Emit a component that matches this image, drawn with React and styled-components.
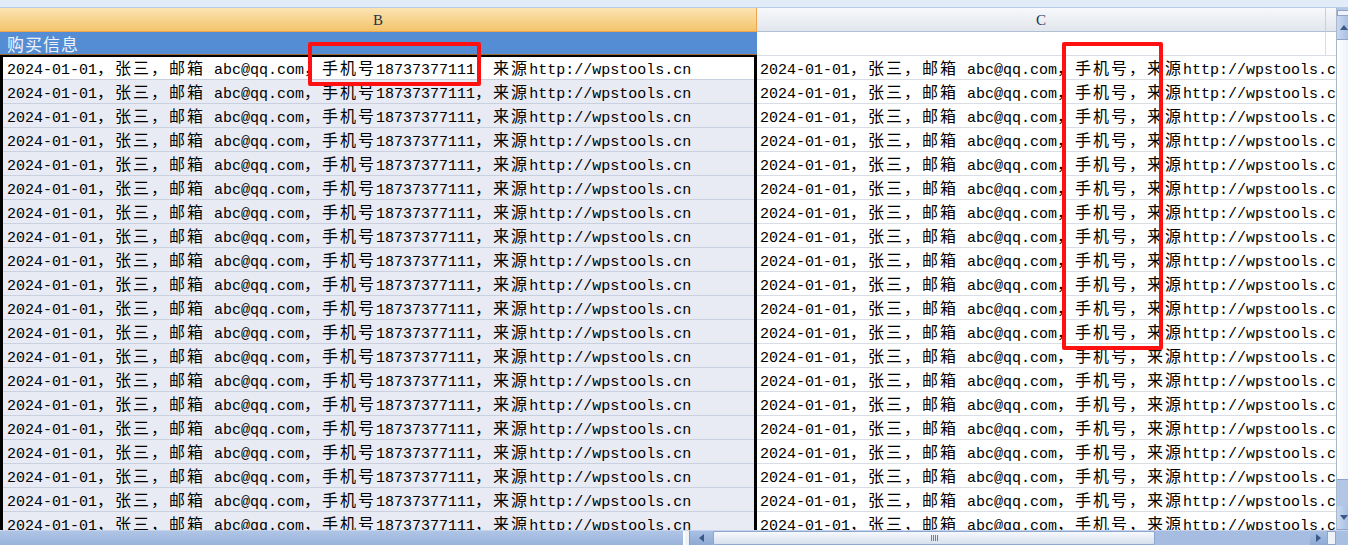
import React from "react";
import styled, { createGlobalStyle } from "styled-components";

const Global = createGlobalStyle`
  html, body { margin: 0; padding: 0; background: #ffffff; overflow: hidden; }
  #root { width: 1348px; height: 545px; }
  * { box-sizing: border-box; }
`;

const Frame = styled.div`
  position: relative;
  width: 1348px;
  height: 545px;
  display: flex;
  flex-direction: column;
  overflow: hidden;
  background: #fff;
`;

const TopStrip = styled.div`
  height: 8px;
  flex: none;
  background: #e2ecf8;
  border-bottom: 1px solid #b7cbe6;
`;

const Main = styled.div`
  flex: 1;
  display: flex;
  min-height: 0;
`;

const Sheet = styled.div`
  position: relative;
  flex: 1;
  overflow: hidden;
  display: flex;
  flex-direction: column;
`;

const Row = styled.div`
  display: flex;
  height: 24px;
  flex: none;
`;

const ColHeader = styled.div`
  height: 24px;
  display: flex;
  align-items: center;
  justify-content: center;
  font-family: "Liberation Serif", serif;
  font-size: 15px;
  color: #27344a;
  padding-top: 1px;
  ${(p) =>
    p.$selected
      ? `
    width: 757px;
    background: linear-gradient(#fbe4b3, #f4c46b);
    border-bottom: 1px solid #eea54c;
    border-right: 1px solid #eea54c;
  `
      : `
    width: 569px;
    background: linear-gradient(#f7f8fa, #e2e6ed);
    border-bottom: 1px solid #b2c0d3;
    border-right: 1px solid #c6cfdb;
  `}
`;

const ColHeaderFill = styled.div`
  flex: 1;
  height: 24px;
  background: linear-gradient(#f7f8fa, #e2e6ed);
  border-bottom: 1px solid #b2c0d3;
`;

const TitleCell = styled.div`
  width: 757px;
  height: 24px;
  background: #548dd4;
  box-shadow: inset 0 -2px 0 #9c6c38;
  color: #eef3fb;
  font-family: "Noto Sans CJK SC", sans-serif;
  font-size: 17px;
  letter-spacing: 1px;
  line-height: 24px;
  padding-left: 7px;
`;

const BlankCell = styled.div`
  height: 24px;
  background: #fff;
  border-bottom: 1px solid #d9dde4;
  ${(p) => (p.$fill ? "flex: 1;" : "width: 569px; border-right: 1px solid #d9dde4;")}
`;

const BCell = styled.div`
  width: 757px;
  flex: none;
  height: 24px;
  line-height: 22px;
  padding: 0 0 0 7px;
  white-space: pre;
  background: ${(p) => (p.$active ? "#ffffff" : "#e8ebf4")};
  border-bottom: 1px solid #c9d0df;
  color: #000;
`;

const CCell = styled.div`
  flex: 1;
  height: 24px;
  line-height: 22px;
  padding: 0 0 0 3px;
  white-space: pre;
  overflow: hidden;
  background: #fff;
  border-bottom: 1px solid #d9dde4;
  color: #000;
`;

const Latin = styled.span`
  font-family: "Liberation Mono", monospace;
  font-size: 15px;
`;

const Han = styled.span`
  font-family: "Noto Sans CJK SC", sans-serif;
  font-size: 16px;
  letter-spacing: 2px;
`;

const Selection = styled.div`
  position: absolute;
  left: 0;
  top: 47px;
  width: 757px;
  height: 520px;
  border: 3px solid #000;
  border-top-width: 2px;
  pointer-events: none;
`;

const RedBox = styled.div`
  position: absolute;
  border: 4px solid #ff1111;
  border-radius: 2px;
  pointer-events: none;
  left: ${(p) => p.$x}px;
  top: ${(p) => p.$y}px;
  width: ${(p) => p.$w}px;
  height: ${(p) => p.$h}px;
`;

const VScroll = styled.div`
  width: 12px;
  flex: none;
  display: flex;
  flex-direction: column;
  background: #b3c6e5;
  border-left: 1px solid #a7b7cc;
`;

const SplitBox = styled.div`
  height: 6px;
  margin-top: 2px;
  background: #eef3fa;
  border: 1px solid #8ea5c9;
  border-right: none;
`;

const VButton = styled.div`
  height: 24px;
  flex: none;
  display: flex;
  align-items: center;
  justify-content: center;
  padding-left: 2px;
  background: linear-gradient(90deg, #c9d8ef, #a9c0e3);
  border-bottom: 1px solid #8ea5c9;
`;

const VThumb = styled.div`
  height: 440px;
  flex: none;
  background: linear-gradient(90deg, #ffffff, #eef2f8);
  border-bottom: 1px solid #8ea5c9;
`;

const VTrack = styled.div`
  flex: 1;
  background: #b3c6e5;
`;

const HScroll = styled.div`
  height: 15px;
  flex: none;
  display: flex;
  background: #a3bbe0;
  border-top: 1px solid #c5d4ea;
`;

const TabArea = styled.div`
  width: 683px;
  background: linear-gradient(#afc5e6, #9ab3da);
`;

const Splitter = styled.div`
  width: 7px;
  background: #eef3fa;
  border-left: 2px solid #ffffff;
  border-right: 1px solid #7f9cc8;
`;

const HButton = styled.div`
  width: ${(p) => p.$w}px;
  display: flex;
  align-items: center;
  justify-content: center;
  background: linear-gradient(#a9c0e3, #8ea9d3);
`;

const HThumb = styled.div`
  width: 442px;
  display: flex;
  align-items: center;
  justify-content: center;
  background: linear-gradient(#f7f9fc, #d7e0ee);
  border: 1px solid #8ea7cf;
  border-radius: 2px;
`;

const Grip = styled.div`
  width: 7px;
  height: 6px;
  background: repeating-linear-gradient(90deg, #6d7f99 0 1px, transparent 1px 2px);
`;

const HTrack = styled.div`
  flex: 1;
  background: #a6bde1;
`;

const EndBox = styled.div`
  width: 9px;
  background: #eef3fa;
  border: 1px solid #8ea5c9;
`;

const Corner = styled.div`
  width: 12px;
  background: #a9bfe2;
`;

function Mixed({ text }) {
  const parts = text.split(/([\u0000-\u007f]+)/).filter(Boolean);
  return parts.map((t, i) =>
    /^[\u0000-\u007f]+$/.test(t) ? <Latin key={i}>{t}</Latin> : <Han key={i}>{t}</Han>
  );
}

const Arrow = ({ dir }) => {
  const pts = {
    up: "0,6 4,1 8,6",
    down: "0,1 8,1 4,6",
    left: "6,0 6,8 1,4",
    right: "1,0 1,8 6,4",
  }[dir];
  return (
    <svg width="8" height="8" viewBox="0 0 8 8">
      <polygon points={pts} fill="#3a5888" />
    </svg>
  );
};

const B_TEXT = "2024-01-01，张三，邮箱 abc@qq.com，手机号18737377111，来源http://wpstools.cn";
const C_TEXT = "2024-01-01，张三，邮箱 abc@qq.com，手机号，来源http://wpstools.cn";
const ROWS = Array.from({ length: 20 }, (_, i) => i);

export default function App() {
  return (
    <Frame>
      <Global />
      <TopStrip />
      <Main>
        <Sheet>
          <Row>
            <ColHeader $selected>B</ColHeader>
            <ColHeader>C</ColHeader>
            <ColHeaderFill />
          </Row>
          <Row>
            <TitleCell>购买信息</TitleCell>
            <BlankCell />
            <BlankCell $fill />
          </Row>
          {ROWS.map((i) => (
            <Row key={i}>
              <BCell $active={i === 0}>
                <Mixed text={B_TEXT} />
              </BCell>
              <CCell>
                <Mixed text={C_TEXT} />
              </CCell>
            </Row>
          ))}
          <Selection />
        </Sheet>
        <VScroll>
          <SplitBox />
          <VButton>
            <Arrow dir="up" />
          </VButton>
          <VThumb />
          <VTrack />
          <VButton>
            <Arrow dir="down" />
          </VButton>
        </VScroll>
      </Main>
      <HScroll>
        <TabArea />
        <Splitter />
        <HButton $w={23}>
          <Arrow dir="left" />
        </HButton>
        <HThumb>
          <Grip />
        </HThumb>
        <HTrack />
        <HButton $w={17}>
          <Arrow dir="right" />
        </HButton>
        <EndBox />
        <Corner />
      </HScroll>
      <RedBox $x={308} $y={42} $w={173} $h={44} />
      <RedBox $x={1062} $y={42} $w={101} $h={308} />
    </Frame>
  );
}
